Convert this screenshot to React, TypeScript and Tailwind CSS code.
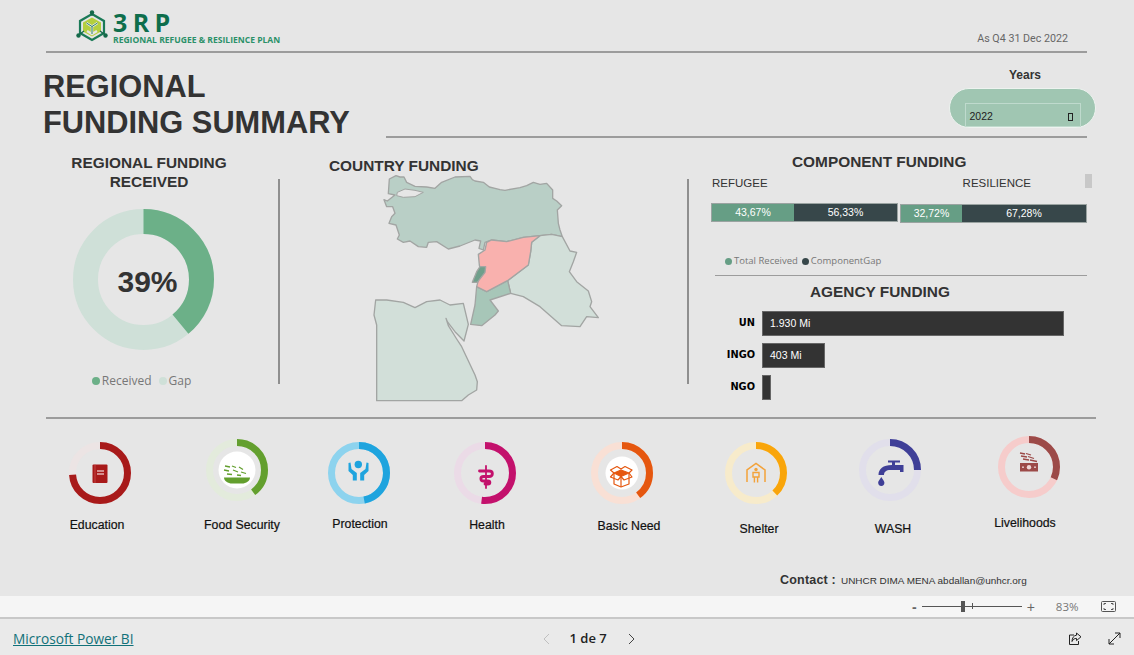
import React from "react";

function Ring({ pct, color, track, children }: { pct: number; color: string; track: string; children?: React.ReactNode }) {
  return (
    <svg width="62" height="62" viewBox="0 0 62 62" className="block">
      <circle cx="31" cy="31" r="27.5" fill="none" stroke={track} strokeWidth="7" />
      <circle cx="31" cy="31" r="27.5" fill="none" stroke={color} strokeWidth="7" pathLength={100} strokeDasharray={`${pct} ${100 - pct}`} transform="rotate(-90 31 31)" />
      {children}
    </svg>
  );
}

const sf = "font-['Liberation_Sans',Arial,sans-serif]";
const ui = "font-['Open_Sans',sans-serif]";

function Logo() {
  return (
    <div className="flex items-start">
      <svg width="32" height="34" viewBox="0 0 32 34" className="mt-[10px] block">
        <path d="M16 4 L28 11 V23 L16 30 L4 23 V11 Z" fill="none" stroke="#1b7a57" strokeWidth="2.2" />
        <path d="M16 7.5 L25 12.5 V21.5 L16 26.5 L7 21.5 V12.5 Z" fill="#b4cf3e" />
        <path d="M10.5 13 L16 16.5 L21.5 13 M16 16.5 V24 M11 21 L16 24 L21 21" fill="none" stroke="#e6e6e6" strokeWidth="2.4" />
        <path d="M10.5 13 L16 16.5 L21.5 13 M16 16.5 V24" fill="none" stroke="#1b7a57" strokeWidth="0.9" />
        <path d="M16 2 V6 M4 24 L8 21 M28 24 L24 21" stroke="#14694a" strokeWidth="1.2" />
        <circle cx="16" cy="2.5" r="2.2" fill="#14694a" />
        <circle cx="2.5" cy="25.5" r="2.2" fill="#14694a" />
        <circle cx="29.5" cy="25.5" r="2.2" fill="#14694a" />
      </svg>
      <div className="ml-[5px] mt-[12px] flex flex-col font-['Open_Sans',sans-serif] font-bold">
        <span className="text-[25px] leading-[21px] tracking-[5.4px] text-[#0e6e4c]">3RP</span>
        <span className="mt-[2px] whitespace-nowrap text-[8.55px] leading-[10px] text-[#2b9169]">REGIONAL REFUGEE &amp; RESILIENCE PLAN</span>
      </div>
    </div>
  );
}

function MapShape() {
  const stroke = "#a2a5a3";
  return (
    <svg width="260" height="245" viewBox="0 0 780 735" className="block">
      <g strokeWidth="4" stroke={stroke} strokeLinejoin="round">
        <path fill="#b9cfc6" d="M88,42 L108,32 L120,36 L132,36 L140,52 L165,64 L200,66 L225,70 L245,52 L285,36 L330,34 L337,44 L345,48 L370,52 L388,66 L405,70 L420,74 L435,76 L480,68 L500,62 L520,52 L540,58 L560,55 L578,75 L578,100 L590,108 L605,122 L592,135 L595,175 L600,195 L607,215 L575,208 L540,212 L490,217 L440,230 L395,225 L375,232 L370,255 L357,250 L362,228 L345,225 L300,243 L265,252 L230,230 L205,232 L200,247 L175,245 L150,228 L130,232 L112,222 L118,210 L108,180 L87,175 L95,155 L105,145 L98,125 L80,125 L72,104 L82,108 L105,90 L85,86 Z" />
        <path fill="#e6e6e6" strokeWidth="3" d="M112,82 L135,72 L165,76 L190,82 L165,95 L130,97 L110,92 Z" />
        <path fill="#d2dfd9" d="M540,212 L575,208 L607,215 L630,258 L650,262 L640,290 L628,320 L650,350 L685,378 L695,410 L690,425 L715,458 L680,455 L660,485 L605,482 L540,425 L490,395 L452,385 L443,347 L505,300 L512,260 L515,232 Z" />
        <path fill="#a7c6b8" d="M350,365 L380,380 L443,347 L452,385 L390,405 L415,438 L405,450 L365,482 L332,478 L345,420 Z" />
        <path fill="#f9b1ae" d="M540,212 L515,232 L512,260 L505,300 L445,345 L380,380 L350,365 L362,320 L358,300 L355,268 L375,255 L380,232 L395,225 L440,230 L490,217 Z" />
        <path fill="#6f9f8b" d="M360,305 L377,305 L375,322 L352,352 L337,352 L350,320 Z" />
        <path fill="#d2dfd9" d="M47,405 L80,405 L130,412 L165,428 L200,410 L240,405 L270,420 L310,415 L325,478 L312,528 L285,500 L262,470 L258,460 L265,482 L290,522 L305,545 L345,630 L352,650 L350,675 L325,690 L305,707 L50,707 L50,480 L42,450 Z" />
      </g>
    </svg>
  );
}

function Bar({ a, b, wa, wb, className }: { a: string; b: string; wa: string; wb: string; className: string }) {
  return (
    <div className={`flex h-[19px] w-[187px] border border-[#9aa3a1] text-[10.5px] text-white ${className}`}>
      <div className={`flex items-center justify-center bg-[#669e85] ${wa}`}>{a}</div>
      <div className={`flex items-center justify-center bg-[#37474a] ${wb}`}>{b}</div>
    </div>
  );
}

function Agency({ label, value, w, mt }: { label: string; value?: string; w: string; mt: string }) {
  return (
    <div className={`flex items-center ${mt}`}>
      <span className="w-[55px] text-right font-['DejaVu_Sans',sans-serif] text-[9.8px] font-bold text-black">{label}</span>
      <div className={`ml-[7px] flex h-[25px] items-center border border-[#666] bg-[#333] pl-[7px] text-[10.5px] text-white ${w}`}>{value}</div>
    </div>
  );
}

const items = [
  { label: "Education", pct: 74, color: "#a81a1a", track: "#ece4e4", cls: "ml-0 mt-[22px]", lab: "mt-[13px] -ml-[3px]", white: 0,
    icon: <g><rect x="23.5" y="22.5" width="15" height="18.5" rx="1" fill="#a81a1a" /><path d="M26 22.5 V41" stroke="#c9504f" strokeWidth="0.8" /><path d="M28 29 H35 M28 32 H35" stroke="#fff" strokeWidth="1.1" /></g> },
  { label: "Food Security", pct: 40, color: "#639f2e", track: "#e3ebdc", cls: "ml-[75px] mt-[19px]", lab: "mt-[16px] ml-[5px]", white: 18.5,
    icon: <g><path d="M18 38.5 H44 C44 42 40 44.5 36 44.5 H26 C22 44.5 18 42 18 38.5 Z" fill="#639f2e" /><path d="M19 27 L24 28 M26 27 L30 28.5 M33 28 L37 30.5 M18 31 L23 32 M27 31 L32 33 M35 33 L40 34.5 M21 35 L26 35.5 M31 36 L35 36.5" stroke="#639f2e" strokeWidth="1.3" /></g> },
  { label: "Protection", pct: 47, color: "#1fa4de", track: "#8dd3ee", cls: "ml-[60px] mt-[22px]", lab: "mt-[12px] ml-[1px]", white: 0,
    icon: <g fill="#1fa4de"><circle cx="30.3" cy="22.5" r="3.7" /><path d="M20.5 21 L22.5 20.5 L23.5 27 L28.8 31 V38.5 H24.8 V33 L20.5 29 Z" /><path d="M40.5 21 L38.5 20.5 L37.5 27 L32.2 31 V38.5 H36.2 V33 L40.5 29 Z" /></g> },
  { label: "Health", pct: 52, color: "#c3116c", track: "#ebdbe7", cls: "ml-[64px] mt-[22px]", lab: "mt-[13px] ml-[2px]", white: 0,
    icon: <g fill="none" stroke="#c3116c" strokeLinecap="round"><path d="M32 24 V46" strokeWidth="1.8" /><path d="M25.5 29 H35 C39.5 29 39.5 34.5 35 34.5 H29.5 C26 34.5 26 39 29.5 39 H34 C36.5 39 36.5 42 34 42 H31" strokeWidth="2.8" /></g> },
  { label: "Basic Need", pct: 40, color: "#e5570f", track: "#f9e0d5", cls: "ml-[75px] mt-[22px]", lab: "mt-[14px] ml-[7px]", white: 16.5,
    icon: <g stroke="#e5570f" fill="none" strokeWidth="1.2" strokeLinejoin="round"><path d="M23 31 V42 L30 45 L38 42 V31" /><path d="M30 34.5 V45" /><path d="M30 28 L23 31 L30 34.5 L38 31 Z" fill="#e5570f" /><path d="M23 31 L19.5 28 L26 24.5 L30 27 L34 24.5 L41 28 L38 31 M23 31 L19.5 35 L27 38 L30 34.5 L33 38 L41 35 L38 31" /></g> },
  { label: "Shelter", pct: 38, color: "#f9a50a", track: "#f7ebcb", cls: "ml-[72px] mt-[22px]", lab: "mt-[17px] ml-[3px]", white: 0,
    icon: <g fill="none" stroke="#f3a23a"><path d="M22 40 V28 L31 21.5 L40 28 V40" strokeWidth="1.5" /><circle cx="31" cy="27.5" r="1.7" fill="#f3a23a" stroke="none" /><path d="M28 30.5 H34 V35 H28 Z M29.4 35 V40.5 M32.6 35 V40.5" strokeWidth="1.4" /></g> },
  { label: "WASH", pct: 25, color: "#3f3f97", track: "#e1dfeb", cls: "ml-[72px] mt-[19px]", lab: "mt-[20px] ml-[3px]", white: 0,
    icon: <g fill="#3f3f97"><path d="M29 21.5 H41 V23.5 H36 V26 H44.5 V33 H41 V31 H31.5 C27 31 25 33 25 36 H19.5 C19.5 30 24 26 33 26 V23.5 H29 Z" /><path d="M22.3 38 C20 41.5 19.2 42.5 19.2 43.8 A3.1 3.1 0 0 0 25.4 43.8 C25.4 42.5 24.6 41.5 22.3 38 Z" /></g> },
  { label: "Livelihoods", pct: 32, color: "#9c4a48", track: "#f6cccb", cls: "ml-[77px] mt-[16px]", lab: "mt-[17px] -ml-[4px]", white: 0,
    icon: <g fill="#9c4a48"><path d="M22 17 L27 18 M28 17.5 L33 19 M23 20 L29 21 M30 20.5 L36 22.5 M25 23 L31 24 M32 24 L39 25.5" stroke="#9c4a48" strokeWidth="1.3" /><rect x="22" y="27" width="18" height="8.5" /><circle cx="31" cy="31.2" r="2.2" fill="#f0d8d8" /><circle cx="25" cy="31.2" r="0.9" fill="#f0d8d8" /><circle cx="37" cy="31.2" r="0.9" fill="#f0d8d8" /></g> },
];

export default function App() {
  return (
    <div className={`flex h-[655px] w-[1134px] flex-col overflow-hidden bg-[#e6e6e6] ${sf}`}>
      <div className="flex h-[596px] flex-col">
        <header className="ml-[46px] flex h-[53px] w-[1041px] justify-between border-b-2 border-[#9c9c9c]">
          <div className="ml-[30px]"><Logo /></div>
          <span className="mr-[19px] mt-[31px] font-['Roboto',sans-serif] text-[10.7px] leading-[16px] text-[#666]">As Q4 31 Dec 2022</span>
        </header>

        <div className="flex h-[85px]">
          <h1 className="w-[386px] pl-[43px] pt-[16px] text-[30.8px] font-bold leading-[36px] text-[#333]">REGIONAL<br />FUNDING SUMMARY</h1>
          <div className="flex w-[701px] flex-col items-end border-b-2 border-[#9c9c9c]">
            <span className="mr-[46px] mt-[15px] text-[12px] font-bold leading-[14px] text-[#333]">Years</span>
            <div className="-mr-[9px] mt-[6px] flex h-[40px] w-[147px] items-end justify-center rounded-[20px] border border-[#eef3f0] bg-[#a0c6b2]">
              <div className="flex h-[24px] w-[116px] items-center justify-between border border-[#bfdacd] pl-[4px] pr-[5px] pt-[3px] text-[10.5px] text-[#222]">
                <span>2022</span>
                <span className="mr-[2px] h-[8px] w-[5px] border border-[#222]" />
              </div>
            </div>
          </div>
        </div>

        <main className="ml-[46px] flex h-[281px] w-[1050px] border-b-2 border-[#9c9c9c]">
          <section className="flex w-[232px] flex-col items-center">
            <h2 className="-ml-[26px] mt-[15px] w-[180px] text-center text-[15.4px] font-bold leading-[19px] text-[#333]">REGIONAL FUNDING RECEIVED</h2>
            <div className="relative -ml-[38px] mt-[18px] h-[141px] w-[141px]">
              <svg width="141" height="141" viewBox="0 0 141 141" className="block">
                <circle cx="70.5" cy="70.5" r="58" fill="none" stroke="#cfe0d8" strokeWidth="25" />
                <circle cx="70.5" cy="70.5" r="58" fill="none" stroke="#6cb088" strokeWidth="25" pathLength={100} strokeDasharray="39 61" transform="rotate(-90 70.5 70.5)" />
              </svg>
              <span className="absolute inset-0 flex items-center justify-center pl-[9px] pt-[4px] text-[30px] font-bold text-[#333]">39%</span>
            </div>
            <div className={`-ml-[41px] mt-[23px] flex items-center text-[12px] leading-[16px] text-[#777] ${ui}`}>
              <span className="mr-[2px] h-[8px] w-[8px] rounded-full bg-[#6cb088]" />Received
              <span className="ml-[7px] mr-[2px] h-[8px] w-[8px] rounded-full bg-[#cfe0d8]" />Gap
            </div>
          </section>

          <div className="mt-[41px] h-[205px] w-[2px] bg-[#8f8f8f]" />

          <section className="relative w-[407px]">
            <h2 className="ml-[49px] mt-[18px] text-[15.4px] font-bold leading-[19px] text-[#333]">COUNTRY FUNDING</h2>
            <div className="-mt-[10px] ml-[80px]"><MapShape /></div>
          </section>

          <div className="mt-[41px] h-[205px] w-[2px] bg-[#8f8f8f]" />

          <section className="flex w-[407px] flex-col">
            <div className="relative">
              <h2 className="ml-[103px] mt-[14px] text-[15.4px] font-bold leading-[19px] text-[#333]">COMPONENT FUNDING</h2>
              <span className="absolute right-[4px] top-[36px] h-[14px] w-[7px] bg-[#c8c8c8]" />
            </div>
            <div className="ml-[23px] mt-[5px] flex w-[319px] justify-between text-[11.5px] leading-[14px] text-[#333]">
              <span>REFUGEE</span>
              <span>RESILIENCE</span>
            </div>
            <div className="ml-[22px] mt-[13px] flex items-start gap-[2px]">
              <Bar a="43,67%" b="56,33%" wa="w-[82px]" wb="flex-1" className="" />
              <Bar a="32,72%" b="67,28%" wa="w-[61px]" wb="flex-1" className="mt-[1px]" />
            </div>
            <div className={`ml-[36px] mt-[31px] flex items-center text-[9.5px] leading-[14px] text-[#777] ${ui}`}>
              <span className="mr-[2px] h-[7px] w-[7px] rounded-full bg-[#669e85]" />Total Received
              <span className="ml-[4px] mr-[2px] h-[7px] w-[7px] rounded-full bg-[#37474a]" />ComponentGap
            </div>
            <div className="ml-[26px] mt-[7px] w-[372px] border-t border-[#9c9c9c]" />
            <h2 className="ml-[121px] mt-[6px] text-[15.4px] font-bold leading-[19px] text-[#333]">AGENCY FUNDING</h2>
            <div className="mt-[10px] flex flex-col pl-[11px]">
              <Agency label="UN" value="1.930 Mi" w="w-[302px]" mt="" />
              <Agency label="INGO" value="403 Mi" w="w-[63px]" mt="mt-[7px]" />
              <Agency label="NGO" w="w-[9px]" mt="mt-[7px]" />
            </div>
          </section>
        </main>

        <div className="flex pl-[69px] pt-[1px]">
          {items.map((it) => (
            <div key={it.label} className={`w-[62px] ${it.cls}`}>
              <Ring pct={it.pct} color={it.color} track={it.track}>
                {it.white > 0 && <circle cx="31" cy="31" r={it.white} fill="#fff" />}
                {it.icon}
              </Ring>
              <div className={`flex h-[16px] w-[62px] items-center justify-center whitespace-nowrap text-[12.3px] text-[#111] [-webkit-text-stroke:0.2px_#111] ${it.lab}`}>{it.label}</div>
            </div>
          ))}
        </div>

        <div className="mt-auto flex items-baseline pb-[6px] pl-[780px] text-[#333]">
          <span className="text-[12.5px] font-bold tracking-[0.2px]">Contact :</span>
          <span className="ml-[5px] text-[9.95px]">UNHCR DIMA MENA abdallan@unhcr.org</span>
        </div>
      </div>

      <div className="flex h-[23px] items-center border-b-2 border-[#c8c8c8] bg-[#f5f5f5] text-[#666]">
        <span className="ml-[912px] text-[14px] font-bold leading-none">-</span>
        <div className="relative ml-[5px] h-[1px] w-[100px] bg-[#555]">
          <span className="absolute left-[39px] top-[-5px] h-[11px] w-[4px] bg-[#555]" />
          <span className="absolute left-[50px] top-[-3px] h-[6px] w-[1px] bg-[#555]" />
        </div>
        <span className="ml-[5px] text-[14px] leading-none">+</span>
        <span className={`ml-[21px] text-[11.5px] text-[#777] ${ui}`}>83%</span>
        <svg width="15" height="11" viewBox="0 0 15 11" className="ml-[22px] block" fill="none" stroke="#555">
          <rect x="0.5" y="0.5" width="14" height="10" rx="1" />
          <path d="M3 4 V2.5 H5 M10 2.5 H12 V4 M3 7 V8.5 H5 M10 8.5 H12 V7" />
        </svg>
      </div>

      <footer className={`flex flex-1 items-center bg-[#eaeaea] pt-[3px] ${ui}`}>
        <a className="ml-[13px] text-[13.7px] leading-none text-[#117179] underline">Microsoft Power BI</a>
        <svg width="8" height="12" viewBox="0 0 8 12" fill="none" stroke="#c0c0c0" className="ml-[408px] block"><path d="M7 1 L2 6 L7 11" /></svg>
        <span className="ml-[20px] text-[13px] font-semibold text-[#222]">1 de 7</span>
        <svg width="8" height="12" viewBox="0 0 8 12" fill="none" stroke="#444" className="ml-[21px] block"><path d="M1 1 L6 6 L1 11" /></svg>
        <svg width="14" height="14" viewBox="0 0 14 14" fill="none" stroke="#222" className="ml-[432px] block">
          <path d="M6 3 H1.5 V12.5 H10.5 V9" />
          <path d="M8.5 1 L13 4.8 L8.5 8.6 V6.4 C6.5 6.4 5 7.2 4 9.5 C4 6 5.8 3.4 8.5 3.2 Z" />
        </svg>
        <svg width="13" height="13" viewBox="0 0 13 13" fill="none" stroke="#222" className="ml-[26px] block">
          <path d="M1 12 L12 1 M7 1 H12 V6 M1 7 V12 H6" />
        </svg>
      </footer>
    </div>
  );
}
